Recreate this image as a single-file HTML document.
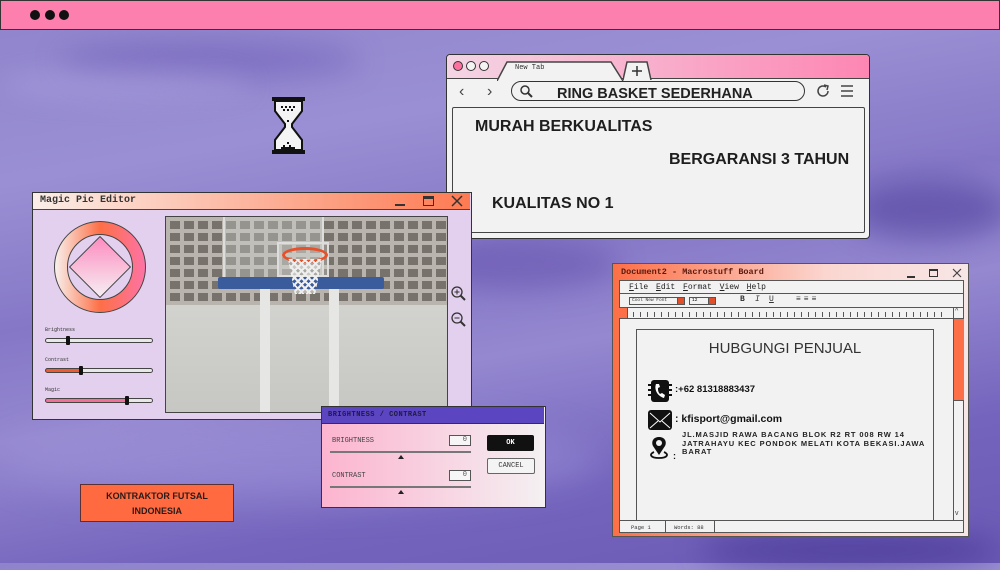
<!DOCTYPE html>
<html><head><meta charset="utf-8"><style>
*{margin:0;padding:0;box-sizing:border-box}
body{width:1000px;height:563px;overflow:hidden;position:relative;font-family:"Liberation Sans",sans-serif;
background:linear-gradient(170deg,#8f84cc 0%,#9a8fd4 25%,#8577c6 45%,#9588d0 60%,#7464bd 80%,#6b5ab5 100%);}
.abs{position:absolute}
.mono{font-family:"Liberation Mono",monospace}
.b{border:1.5px solid #333}
</style></head><body>
<div class="abs" style="left:60px;top:40px;width:300px;height:40px;background:rgba(90,70,170,.35);filter:blur(14px);border-radius:50%"></div>
<div class="abs" style="left:0;top:70px;width:250px;height:30px;background:rgba(180,170,230,.35);filter:blur(12px);border-radius:50%"></div>
<div class="abs" style="left:850px;top:180px;width:160px;height:60px;background:rgba(70,55,150,.5);filter:blur(14px);border-radius:50%"></div>
<div class="abs" style="left:0;top:420px;width:600px;height:80px;background:rgba(170,160,225,.35);filter:blur(18px);border-radius:50%"></div>
<div class="abs" style="left:700px;top:530px;width:300px;height:40px;background:rgba(60,45,140,.5);filter:blur(14px);border-radius:50%"></div>
<div class="abs" style="left:420px;top:240px;width:200px;height:50px;background:rgba(80,60,160,.35);filter:blur(14px);border-radius:50%"></div>

<div class="abs" style="left:0;top:0;width:1000px;height:30px;background:#fd7fad;border:1.5px solid #333"></div>
<div class="abs" style="left:30px;top:10px;width:10px;height:10px;border-radius:50%;background:#111"></div>
<div class="abs" style="left:45px;top:10px;width:10px;height:10px;border-radius:50%;background:#111"></div>
<div class="abs" style="left:59px;top:10px;width:10px;height:10px;border-radius:50%;background:#111"></div>

<svg class="abs" style="left:271px;top:96px" width="36" height="60" viewBox="0 0 36 60">
<rect x="1" y="1" width="33" height="4" fill="#111"/><rect x="1" y="54" width="33" height="4" fill="#111"/>
<path d="M4 5 H31 V15 L21 28 L21 31 L31 44 V54 H4 V44 L14 31 L14 28 L4 15 Z" fill="#f4f4f4" stroke="#111" stroke-width="2"/>
<g fill="#111"><rect x="10" y="10" width="2" height="2"/><rect x="14" y="10" width="2" height="2"/><rect x="18" y="10" width="2" height="2"/><rect x="22" y="10" width="2" height="2"/><rect x="12" y="13" width="2" height="2"/><rect x="16" y="13" width="2" height="2"/><rect x="20" y="13" width="2" height="2"/><rect x="16" y="24" width="2" height="2"/><rect x="16" y="46" width="2" height="2"/><rect x="12" y="49" width="2" height="2"/><rect x="18" y="49" width="2" height="2"/><rect x="10" y="51" width="14" height="2"/></g>
</svg>

<div class="abs b" style="left:446px;top:54px;width:424px;height:185px;background:#f2f2f2;border-radius:4px;overflow:hidden">
 <div class="abs" style="left:0;top:0;width:424px;height:24px;background:linear-gradient(90deg,#f4d5e4,#fd86b2);border-bottom:1.5px solid #444"></div>
 <div class="abs" style="left:6px;top:6px;width:10px;height:10px;border-radius:50%;background:#fd6f9f;border:1.2px solid #333"></div>
 <div class="abs" style="left:19px;top:6px;width:10px;height:10px;border-radius:50%;background:#f4f4f4;border:1.2px solid #333"></div>
 <div class="abs" style="left:32px;top:6px;width:10px;height:10px;border-radius:50%;background:#f4f4f4;border:1.2px solid #333"></div>
 <svg class="abs" style="left:50px;top:5px" width="130" height="21"><path d="M0 21 L10 2 H114 L126 21" fill="#f2f2f2" stroke="#444" stroke-width="1.5"/></svg>
 <div class="abs mono" style="left:68px;top:9px;font-size:7px;color:#333">New Tab</div>
 <svg class="abs" style="left:176px;top:5px" width="30" height="20"><path d="M0 20 L4 2 H24 L28 20" fill="#f2f2f2" stroke="#444" stroke-width="1.5"/><path d="M14 6 V16 M9 11 H19" stroke="#333" stroke-width="1.5"/></svg>
 <div class="abs" style="left:12px;top:28px;font-size:16px;color:#444">&#8249;</div>
 <div class="abs" style="left:40px;top:28px;font-size:16px;color:#444">&#8250;</div>
 <div class="abs" style="left:64px;top:26px;width:294px;height:20px;border:1.5px solid #333;border-radius:10px"></div>
 <svg class="abs" style="left:72px;top:29px" width="14" height="14"><circle cx="6" cy="6" r="4" fill="none" stroke="#333" stroke-width="1.5"/><path d="M9 9 L13 13" stroke="#333" stroke-width="2"/></svg>
 <div class="abs" style="left:110px;top:31px;font-size:14.5px;font-weight:bold;color:#222">RING BASKET SEDERHANA</div>
 <svg class="abs" style="left:367px;top:27px" width="18" height="18"><path d="M14 9 A5 5 0 1 1 12 5" fill="none" stroke="#444" stroke-width="1.5"/><path d="M10 3 L14 4 L13 8" fill="none" stroke="#444" stroke-width="1.5"/></svg>
 <svg class="abs" style="left:393px;top:29px" width="14" height="14"><path d="M1 2H13M1 7H13M1 12H13" stroke="#444" stroke-width="1.5"/></svg>
 <div class="abs" style="left:5px;top:52px;width:413px;height:126px;border:1.5px solid #444;border-radius:2px"></div>
 <div class="abs" style="left:28px;top:63px;font-size:16px;font-weight:bold;color:#1e1e1e">MURAH BERKUALITAS</div>
 <div class="abs" style="left:222px;top:96px;font-size:16px;font-weight:bold;color:#1e1e1e">BERGARANSI 3 TAHUN</div>
 <div class="abs" style="left:45px;top:140px;font-size:16px;font-weight:bold;color:#1e1e1e">KUALITAS NO 1</div>
</div>

<div class="abs b" style="left:32px;top:192px;width:440px;height:228px;background:#e2d0ee">
 <div class="abs" style="left:0;top:0;width:437px;height:17px;background:linear-gradient(90deg,#fbeee8,#fd7a52);border-bottom:1.5px solid #444"></div>
 <div class="abs mono" style="left:7px;top:2px;font-size:10px;font-weight:bold;color:#333">Magic Pic Editor</div>
 <div class="abs" style="left:362px;top:11px;width:10px;height:2px;background:#333"></div>
 <div class="abs" style="left:390px;top:3px;width:11px;height:10px;border:1.5px solid #333;border-top-width:3px"></div>
 <svg class="abs" style="left:418px;top:2px" width="12" height="12"><path d="M1 1L11 11M11 1L1 11" stroke="#333" stroke-width="1.5"/></svg>
 <div class="abs" style="left:21px;top:28px;width:92px;height:92px;border-radius:50%;border:1.2px solid #444;background:linear-gradient(90deg,#f8f0ec,#fd6f46 50%,#fd73a5)"></div>
 <div class="abs" style="left:34px;top:41px;width:66px;height:66px;border-radius:50%;border:1.2px solid #444;background:#e2d0ee"></div>
 <div class="abs" style="left:45px;top:52px;width:44px;height:44px;transform:rotate(45deg);border:1.2px solid #444;background:linear-gradient(135deg,#fd8cc0,#f6eef2)"></div>
 <div class="abs mono" style="left:12px;top:134px;font-size:5px;color:#333">Brightness</div>
 <div class="abs" style="left:12px;top:145px;width:108px;height:5px;border:1px solid #444;border-radius:3px;background:#e8e8e8"></div>
 <div class="abs" style="left:33px;top:143px;width:4px;height:9px;background:#111;border-radius:1px"></div>
 <div class="abs mono" style="left:12px;top:164px;font-size:5px;color:#333">Contrast</div>
 <div class="abs" style="left:12px;top:175px;width:108px;height:5px;border:1px solid #444;border-radius:3px;background:linear-gradient(90deg,#f05a30 33%,#e8e8e8 33%)"></div>
 <div class="abs" style="left:46px;top:173px;width:4px;height:9px;background:#111;border-radius:1px"></div>
 <div class="abs mono" style="left:12px;top:194px;font-size:5px;color:#333">Magic</div>
 <div class="abs" style="left:12px;top:205px;width:108px;height:5px;border:1px solid #444;border-radius:3px;background:linear-gradient(90deg,#f0709a 75%,#e8e8e8 75%)"></div>
 <div class="abs" style="left:92px;top:203px;width:4px;height:9px;background:#111;border-radius:1px"></div>
 <div class="abs" style="left:132px;top:23px;width:283px;height:197px;border:1.5px solid #444;overflow:hidden;background:#cfcfcb">
  <div class="abs" style="left:0;top:0;width:283px;height:92px;background-color:#77736c;background-image:linear-gradient(90deg,#b9b5ae 4px,transparent 4px),linear-gradient(#b9b5ae 4px,transparent 4px);background-size:14px 12px"></div>
  <div class="abs" style="left:0;top:88px;width:283px;height:110px;background:linear-gradient(#d2d2ce,#c6c6c2)"></div>
  <div class="abs" style="left:57px;top:0;width:101px;height:64px;border:2px solid #ddd;border-top:0;background:rgba(210,210,205,.35)"></div>
  <div class="abs" style="left:111px;top:25px;width:52px;height:35px;border:2px solid #ddd;background:rgba(215,215,210,.3)"></div>
  <div class="abs" style="left:52px;top:60px;width:166px;height:12px;background:#3b5c9c;border-radius:2px"></div>
  <div class="abs" style="left:94px;top:72px;width:10px;height:126px;background:#e6e6e4"></div>
  <div class="abs" style="left:163px;top:72px;width:10px;height:126px;background:#e6e6e4"></div>
  <div class="abs" style="left:116px;top:30px;width:46px;height:16px;border:3px solid #e8502a;border-radius:50%"></div>
  <div class="abs" style="left:122px;top:42px;width:34px;height:35px;background:repeating-linear-gradient(45deg,#eee 0 2px,transparent 2px 5px),repeating-linear-gradient(-45deg,#eee 0 2px,transparent 2px 5px);clip-path:polygon(0 0,100% 0,80% 100%,20% 100%)"></div>
 </div>
 <svg class="abs" style="left:417px;top:92px" width="18" height="18"><circle cx="7" cy="7" r="5" fill="none" stroke="#333" stroke-width="1.3"/><path d="M10.5 10.5L15 15" stroke="#333" stroke-width="2"/><path d="M4.5 7H9.5M7 4.5V9.5" stroke="#333"/></svg>
 <svg class="abs" style="left:417px;top:118px" width="18" height="18"><circle cx="7" cy="7" r="5" fill="none" stroke="#333" stroke-width="1.3"/><path d="M10.5 10.5L15 15" stroke="#333" stroke-width="2"/><path d="M4.5 7H9.5" stroke="#333"/></svg>
</div>

<div class="abs b" style="left:321px;top:406px;width:225px;height:102px;background:linear-gradient(90deg,#fcb4cf,#f4f0f2)">
 <div class="abs" style="left:0;top:0;width:222px;height:17px;background:#5b45c0;border-bottom:1.5px solid #333"></div>
 <div class="abs mono" style="left:6px;top:4px;font-size:7px;font-weight:bold;color:#1e1a40;letter-spacing:.5px">BRIGHTNESS / CONTRAST</div>
 <div class="abs mono" style="left:10px;top:30px;font-size:7px;color:#444">BRIGHTNESS</div>
 <div class="abs" style="left:127px;top:28px;width:22px;height:11px;border:1px solid #555;background:#f6f6f6;font:7px 'Liberation Mono';text-align:right;padding-right:3px;color:#555">0</div>
 <div class="abs" style="left:8px;top:44px;width:141px;height:2px;background:#777"></div>
 <div class="abs" style="left:76px;top:45px;width:0;height:0;border:3px solid transparent;border-bottom:4px solid #222"></div>
 <div class="abs mono" style="left:10px;top:65px;font-size:7px;color:#444">CONTRAST</div>
 <div class="abs" style="left:127px;top:63px;width:22px;height:11px;border:1px solid #555;background:#f6f6f6;font:7px 'Liberation Mono';text-align:right;padding-right:3px;color:#555">0</div>
 <div class="abs" style="left:8px;top:79px;width:141px;height:2px;background:#777"></div>
 <div class="abs" style="left:76px;top:80px;width:0;height:0;border:3px solid transparent;border-bottom:4px solid #222"></div>
 <div class="abs mono" style="left:165px;top:28px;width:47px;height:16px;background:#111;border-radius:2px;color:#fff;font-size:7px;font-weight:bold;text-align:center;line-height:16px">OK</div>
 <div class="abs mono" style="left:165px;top:51px;width:48px;height:16px;background:#f4f4f4;border:1px solid #666;border-radius:2px;color:#333;font-size:7px;text-align:center;line-height:14px">CANCEL</div>
</div>

<div class="abs" style="left:80px;top:484px;width:154px;height:38px;background:#ff6a40;border:1.5px solid #5a3030;text-align:center;font-size:9px;font-weight:bold;color:#2a1a18;line-height:15px;padding-top:4px">KONTRAKTOR FUTSAL<br>INDONESIA</div>

<div class="abs" style="left:612px;top:263px;width:357px;height:274px;background:linear-gradient(90deg,#fd6f46,#fbd6d0 60%,#f7e6e6);border:1.5px solid #555">
 <div class="abs mono" style="left:8px;top:3px;font-size:8.5px;font-weight:bold;color:#5a1a10">Document2 - Macrostuff Board</div>
 <div class="abs" style="left:294px;top:12px;width:8px;height:1.5px;background:#333"></div>
 <div class="abs" style="left:316px;top:5px;width:9px;height:8px;border:1.3px solid #333;border-top-width:2.5px"></div>
 <svg class="abs" style="left:339px;top:4px" width="10" height="10"><path d="M1 1L9 9M9 1L1 9" stroke="#444" stroke-width="1.2"/></svg>
 <div class="abs" style="left:6px;top:16px;width:345px;height:253px;background:#f2f2f2;border:1px solid #555"></div>
 <div class="abs mono" style="left:16px;top:19px;font-size:8px;color:#222;word-spacing:3px"><u>F</u>ile <u>E</u>dit <u>F</u>ormat <u>V</u>iew <u>H</u>elp</div>
 <div class="abs" style="left:6px;top:29px;width:345px;height:1px;background:#555"></div>
 <div class="abs mono" style="left:16px;top:33px;width:56px;height:8px;border:1px solid #555;font-size:4.5px;padding-left:2px;line-height:6px;color:#333">Cool New Font</div>
 <div class="abs" style="left:64px;top:33px;width:8px;height:8px;background:#e0502a;border:1px solid #555"></div>
 <div class="abs mono" style="left:76px;top:33px;width:26px;height:8px;border:1px solid #555;font-size:4.5px;padding-left:2px;line-height:6px">12</div>
 <div class="abs" style="left:95px;top:33px;width:8px;height:8px;background:#e0502a;border:1px solid #555"></div>
 <div class="abs mono" style="left:127px;top:31px;font-size:8px;font-weight:bold;color:#333">B</div>
 <div class="abs mono" style="left:142px;top:31px;font-size:8px;font-style:italic;color:#333">I</div>
 <div class="abs mono" style="left:156px;top:31px;font-size:8px;text-decoration:underline;color:#333">U</div>
 <div class="abs mono" style="left:183px;top:31px;font-size:8px;color:#333;letter-spacing:3px">≡≡≡</div>
 <div class="abs" style="left:6px;top:43px;width:345px;height:1px;background:#555"></div>
 <div class="abs" style="left:6px;top:44px;width:9px;height:10px;background:#fd6f46;border-right:1px solid #555"></div>
 <div class="abs" style="left:20px;top:48px;width:310px;height:5px;background:repeating-linear-gradient(90deg,#555 0 1px,transparent 1px 7px)"></div>
 <div class="abs" style="left:6px;top:54px;width:345px;height:1px;background:#555"></div>
 <div class="abs" style="left:340px;top:44px;width:11px;height:213px;border-left:1px solid #555"></div>
 <div class="abs" style="left:341px;top:55px;width:10px;height:82px;background:#fd6f46;border-bottom:1px solid #555"></div>
 <div class="abs" style="left:342px;top:44px;font-size:7px;color:#444">^</div>
 <div class="abs" style="left:342px;top:246px;font-size:7px;color:#444">v</div>
 <div class="abs" style="left:23px;top:65px;width:298px;height:192px;border:1px solid #555;border-bottom:0"></div>
 <div class="abs" style="left:23px;top:76px;width:298px;text-align:center;font-size:15px;color:#333">HUBGUNGI PENJUAL</div>
 <svg class="abs" style="left:35px;top:116px" width="24" height="22" viewBox="0 0 24 22"><rect x="3" y="0" width="18" height="22" rx="3" fill="#111"/><g fill="#111"><rect x="0" y="4" width="3" height="2"/><rect x="0" y="9" width="3" height="2"/><rect x="0" y="14" width="3" height="2"/><rect x="21" y="4" width="3" height="2"/><rect x="21" y="9" width="3" height="2"/><rect x="21" y="14" width="3" height="2"/></g><path d="M8 4 C6 9 9 16 16 18 L17 15 L14 13 L12 14 C10 12 10 10 10 8 L12 7 L11 4Z" fill="#fff"/></svg>
 <div class="abs" style="left:62px;top:120px;font-size:9.5px;font-weight:bold;color:#111">:+62 81318883437</div>
 <svg class="abs" style="left:35px;top:146px" width="24" height="20"><rect x="0" y="0" width="24" height="20" rx="3" fill="#111"/><path d="M2 3L12 12L22 3M2 18L10 11M22 18L14 11" stroke="#fff" stroke-width="1" fill="none"/></svg>
 <div class="abs" style="left:62px;top:149px;font-size:10.5px;font-weight:bold;color:#111">: kfisport@gmail.com</div>
 <svg class="abs" style="left:35px;top:172px" width="22" height="24"><path d="M11 1 C5 1 3 6 5 10 L11 19 L17 10 C19 6 17 1 11 1Z" fill="#111"/><circle cx="11" cy="7" r="3" fill="#f2f2f2"/><path d="M6 16 C1 18 2 22 11 22 C20 22 21 18 16 16" fill="none" stroke="#111" stroke-width="1.8"/></svg>
 <div class="abs" style="left:60px;top:187px;font-size:9px;font-weight:bold;color:#111">:</div>
 <div class="abs" style="left:69px;top:167px;width:260px;font-size:7.5px;font-weight:bold;color:#222;letter-spacing:.9px;line-height:8.5px">JL.MASJID RAWA BACANG BLOK R2 RT 008 RW 14 JATRAHAYU KEC PONDOK MELATI KOTA BEKASI.JAWA BARAT</div>
 <div class="abs" style="left:6px;top:256px;width:345px;height:1px;background:#555"></div>
 <div class="abs mono" style="left:6px;top:257px;width:47px;height:12px;border-right:1px solid #555;font-size:5.5px;padding:3px 0 0 12px;color:#333">Page 1</div>
 <div class="abs mono" style="left:53px;top:257px;width:49px;height:12px;border-right:1px solid #555;font-size:5.5px;padding:3px 0 0 8px;color:#333">Words: 88</div>
</div>
</body></html>
